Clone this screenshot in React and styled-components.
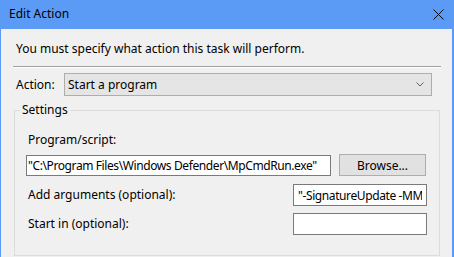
import React from 'react'
import styled, { createGlobalStyle } from 'styled-components'

const GlobalStyle = createGlobalStyle`
  html, body {
    margin: 0;
    padding: 0;
    background: #f0f0f0;
  }
  body {
    font-family: "Noto Sans", "Liberation Sans", sans-serif;
    font-size: 12px;
    color: #000;
  }
`

const Window = styled.div`
  display: flex;
  flex-direction: column;
  width: 454px;
  height: 257px;
  box-sizing: border-box;
  border-left: 1px solid #5b9bf5;
  border-right: 2px solid #5b9bf5;
  background: #f0f0f0;
  overflow: hidden;
`

const TitleBar = styled.div`
  display: flex;
  align-items: center;
  justify-content: space-between;
  height: 29px;
  flex-shrink: 0;
  margin: 0 -2px 0 -1px;
  padding: 0 10px 0 9px;
  background: #5b9bf5;
`

const Title = styled.span`
  line-height: 16px;
  margin-top: -1px;
`

const CloseIcon = styled.svg`
  width: 11px;
  height: 11px;
  display: block;
`

const Content = styled.div`
  display: flex;
  flex-direction: column;
  padding: 0 11px 0 12px;
`

const Instruction = styled.div`
  margin-top: 12px;
  padding-left: 3px;
  line-height: 16px;
`

const Separator = styled.div`
  margin-top: 9px;
  height: 1px;
  background: #a0a0a0;
  border-bottom: 1px solid #ffffff;
`

const ActionRow = styled.div`
  display: flex;
  align-items: center;
  justify-content: space-between;
  margin: 5px 9px 0 0;
`

const Label = styled.span`
  padding-left: ${p => p.$indent || 0}px;
  line-height: 16px;
  white-space: nowrap;
`

const Combo = styled.div`
  display: flex;
  align-items: center;
  justify-content: space-between;
  width: 368px;
  height: 23px;
  box-sizing: border-box;
  padding: 0 7px 0 3px;
  background: #e5e5e5;
  border: 1px solid #adadad;
`

const Chevron = styled.svg`
  width: 8px;
  height: 5px;
  display: block;
`

const GroupBox = styled.fieldset`
  margin: 6px 1px 0 1px;
  padding: 0 12px 20px 11px;
  min-width: 0;
  border: 1px solid #dcdcdc;
  display: flex;
  flex-direction: column;
`

const Legend = styled.legend`
  margin-left: -6px;
  padding: 0 2px;
  line-height: 16px;
`

const FieldLabel = styled.div`
  margin-top: 14px;
  padding-left: 2px;
  line-height: 16px;
`

const Row = styled.div`
  display: flex;
  align-items: center;
  justify-content: space-between;
  margin-top: ${p => p.$gap}px;
`

const TextBox = styled.input`
  width: ${p => p.$width}px;
  height: ${p => p.$height || 22}px;
  box-sizing: border-box;
  margin: 0;
  padding: 0 ${p => p.$pad}px;
  border: 1px solid #7a7a7a;
  border-radius: 0;
  background: #ffffff;
  font: inherit;
  letter-spacing: -0.4px;
  color: #000;
  outline: none;
`

const Button = styled.button`
  width: 87px;
  height: 22px;
  margin: 0 1px 0 0;
  padding: 0;
  box-sizing: border-box;
  background: #e1e1e1;
  border: 1px solid #adadad;
  border-radius: 0;
  font: inherit;
  color: #000;
`

export default function App() {
  return (
    <>
      <GlobalStyle />
      <Window>
        <TitleBar>
          <Title>Edit Action</Title>
          <CloseIcon viewBox="0 0 11 11">
            <path d="M0.5 0.5 L10.5 10.5 M10.5 0.5 L0.5 10.5" stroke="#000" strokeWidth="1" fill="none" />
          </CloseIcon>
        </TitleBar>
        <Content>
          <Instruction>You must specify what action this task will perform.</Instruction>
          <Separator />
          <ActionRow>
            <Label $indent={3}>Action:</Label>
            <Combo>
              <span>Start a program</span>
              <Chevron viewBox="0 0 8 5">
                <path d="M0.5 0.5 L4 4 L7.5 0.5" stroke="#606060" strokeWidth="1" fill="none" />
              </Chevron>
            </Combo>
          </ActionRow>
          <GroupBox>
            <Legend>Settings</Legend>
            <FieldLabel>Program/script:</FieldLabel>
            <Row $gap={6}>
              <TextBox
                $width={305}
                $height={21}
                $pad={1}
                readOnly
                defaultValue={'"C:\\Program Files\\Windows Defender\\MpCmdRun.exe"'}
              />
              <Button>Browse...</Button>
            </Row>
            <Row $gap={8}>
              <Label $indent={2}>Add arguments (optional):</Label>
              <TextBox $width={134} $pad={4} readOnly defaultValue={'"-SignatureUpdate -MMPC"'} />
            </Row>
            <Row $gap={7}>
              <Label $indent={2}>Start in (optional):</Label>
              <TextBox $width={134} $pad={4} readOnly defaultValue="" />
            </Row>
          </GroupBox>
        </Content>
      </Window>
    </>
  )
}
